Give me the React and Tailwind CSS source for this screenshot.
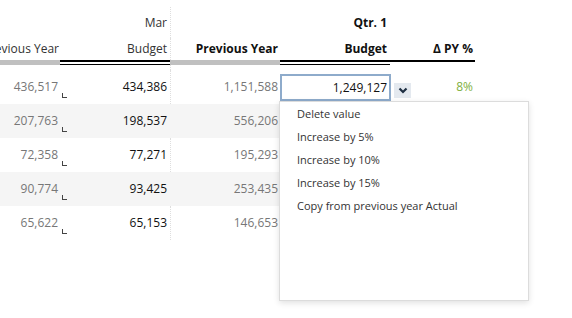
import React from "react";

const rows = [
  { a: "436,517", b: "434,386", c: "1,151,588", d: "1,249,127", e: "8%" },
  { a: "207,763", b: "198,537", c: "556,206" },
  { a: "72,358", b: "77,271", c: "195,293" },
  { a: "90,774", b: "93,425", c: "253,435" },
  { a: "65,622", b: "65,153", c: "146,653" },
];

const grid = "grid grid-cols-[110px_110px_110px_111px_84px]";

function Corner() {
  return (
    <div className="absolute left-[2px] top-[23px] w-[5px] h-[5px] border-l border-b border-[#444]" />
  );
}

function DoubleLine() {
  return (
    <div className="flex flex-col">
      <div className="h-[2px] bg-black" />
      <div className="h-[2px]" />
      <div className="h-[1px] bg-black" />
    </div>
  );
}

export default function App() {
  const menu = [
    "Delete value",
    "Increase by 5%",
    "Increase by 10%",
    "Increase by 15%",
    "Copy from previous year Actual",
  ];
  return (
    <div
      className="relative w-[572px] h-[318px] overflow-hidden bg-white text-[12px]"
      style={{ fontFamily: '"Open Sans", "Noto Sans", sans-serif' }}
    >
      <div className="ml-[-50px] w-[525px]">
        {/* header row 1 */}
        <div className={`${grid} h-[38px] pt-[7px]`}>
          <div />
          <div className="flex items-center justify-end pr-[3px] text-[#333]">Mar</div>
          <div className="border-l border-dotted border-[#dedede]" />
          <div className="flex items-center justify-end pr-[4px] font-bold text-[#111]">Qtr. 1</div>
          <div />
        </div>
        {/* header row 2 */}
        <div className={`${grid} h-[22px]`}>
          <div className="flex items-center justify-end pr-[1px] text-[#333] whitespace-nowrap">Previous Year</div>
          <div className="flex items-center justify-end pr-[3px] text-[#333]">Budget</div>
          <div className="flex items-center justify-end pr-[2px] font-bold text-[#111] border-l border-dotted border-[#dedede]">Previous Year</div>
          <div className="flex items-center justify-end pr-[4px] font-bold text-[#111]">Budget</div>
          <div className="flex items-center justify-end pr-[2px] font-bold text-[#111]">Δ PY %</div>
        </div>
        {/* underline row */}
        <div className={`${grid} h-[5px]`}>
          <div className="bg-[#c0c0c0]" />
          <DoubleLine />
          <div className="bg-[#c0c0c0]" />
          <div className="w-[110px]">
            <DoubleLine />
          </div>
          <div className="ml-[-1px]">
            <div className="h-[2px] bg-black" />
          </div>
        </div>
        <div className={`${grid} h-[5px]`}>
          <div />
          <div />
          <div className="border-l border-dotted border-[#dedede]" />
          <div />
          <div />
        </div>
        {/* data rows */}
        {rows.map((r, i) => (
          <div key={i} className={`${grid} h-[34px] ${i % 2 === 1 ? "bg-[#f5f5f5]" : "bg-white"}`}>
            <div className="flex items-center justify-end pr-[2px] text-[#777]">{r.a}</div>
            <div className="relative flex items-center justify-end pr-[3px] text-[#111]">
              <Corner />
              {r.b}
            </div>
            <div className={`flex items-center justify-end pr-[2px] text-[#777] border-l border-dotted ${i % 2 === 1 ? "border-[#f5f5f5]" : "border-[#dedede]"}`}>{r.c}</div>
            <div className="flex items-start">
              {r.d && (
                <div className="mt-[4px] w-[111px] h-[27px] border-2 border-[#8eabcb] flex items-center justify-end pr-[2px] text-[#111]">
                  {r.d}
                </div>
              )}
            </div>
            <div className="relative flex items-center justify-end pr-[2px] text-[#7fb041]">
              {r.d && (
                <div className="absolute left-[3px] top-[13px] w-[17px] h-[15px] bg-[#e4e9ef] flex items-center justify-center">
                  <svg width="10" height="7" viewBox="0 0 10 7">
                    <path d="M1.5 1.5 L5 5 L8.5 1.5" fill="none" stroke="#1f2f42" strokeWidth="2.2" />
                  </svg>
                </div>
              )}
              {r.e}
            </div>
          </div>
        ))}
      </div>

      {/* dropdown menu */}
      <div className="absolute left-[279px] top-[101px] w-[250px] h-[200px] bg-white border border-[#dcdcdc] shadow-[0_2px_6px_rgba(0,0,0,0.12)] text-[11px] text-[#333]">
        {menu.map((m) => (
          <div key={m} className="h-[23px] leading-[23px] pl-[17px]">
            {m}
          </div>
        ))}
      </div>
    </div>
  );
}
